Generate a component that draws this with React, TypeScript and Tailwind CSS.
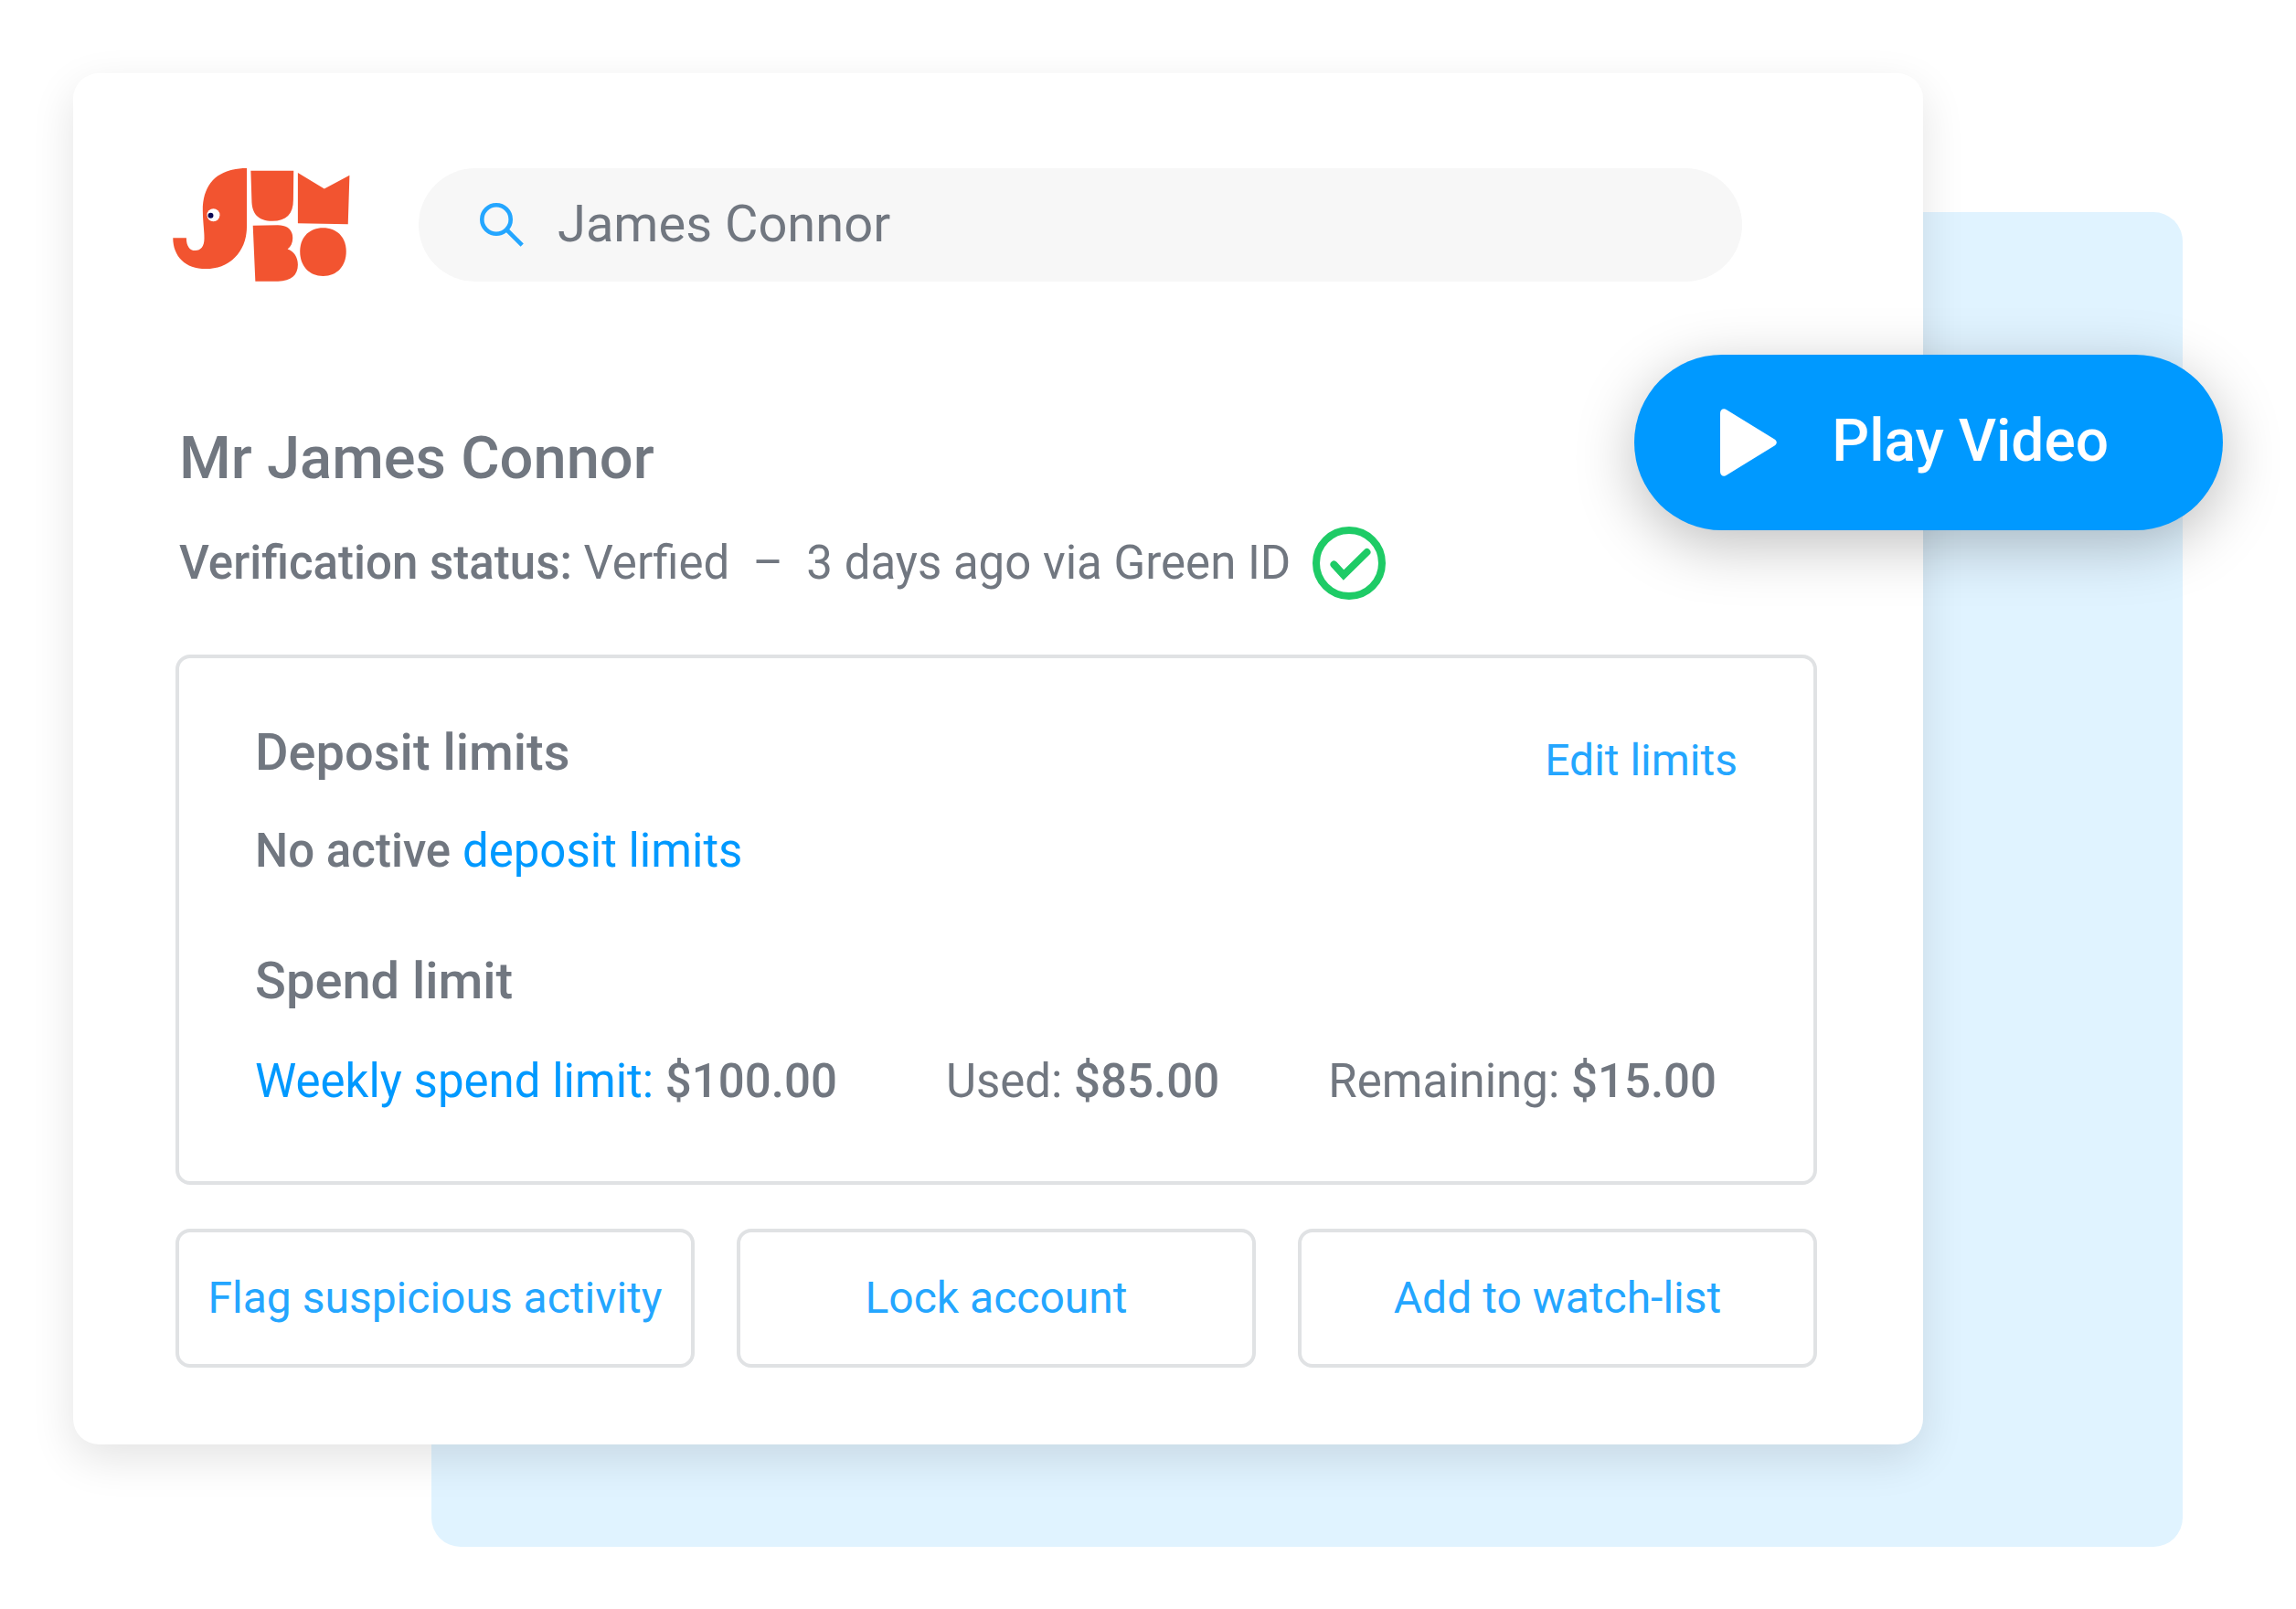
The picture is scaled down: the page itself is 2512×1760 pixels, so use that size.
import { useState } from "react";

// ---------- Data ----------
const ACTIONS = ["Flag suspicious activity", "Lock account", "Add to watch-list"];

// ---------- UI ----------
export default function App() {
    const [query, setQuery] = useState("James Connor");

    return (
        <div className="relative isolate min-h-screen w-full bg-white px-20 pt-20 pb-[180px] font-['Roboto',sans-serif] text-[51px] leading-[60px] text-[#717780] antialiased">
            {/* tinted panel behind the card */}
            <div className="absolute top-[232px] right-[124px] bottom-[68px] left-[472px] -z-10 rounded-[32px] bg-[#e0f3ff]" />

            <main className="mr-[328px] rounded-[28px] bg-white pt-[104px] pb-[84px] shadow-[0_16px_48px_rgba(0,0,0,0.11)]">
                <header className="flex items-center gap-[75px] pr-[198px] pl-[109px]">
                    <JumboLogo />
                    <div className="flex h-[124px] flex-1 items-center gap-[37px] rounded-full bg-[#f7f7f7] px-[67px]">
                        <label htmlFor="search">
                            <SearchIcon />
                        </label>
                        <input
                            id="search"
                            type="text"
                            value={query}
                            onChange={(e) => setQuery(e.target.value)}
                            className="min-w-0 flex-1 bg-transparent pb-0.5 text-[56px] leading-[80px] outline-none"
                        />
                    </div>
                </header>

                <div className="mt-[153px] pr-[116px] pl-28">
                    <h1 className="pl-1 text-[65px] leading-[80px] font-medium">Mr James Connor</h1>
                    <div className="mt-[35px] flex items-center gap-6 pl-1">
                        <p>
                            <span className="font-medium">Verification status:</span> Verfied&nbsp; –&nbsp; 3 days ago via Green ID
                        </p>
                        <CheckIcon />
                    </div>

                    <section className="mt-[60px] rounded-2xl border-4 border-[#e0e2e4] px-[83px] pt-[71px] pb-[79px]">
                        <div className="flex items-start justify-between">
                            <h2 className="text-[56px] leading-[64px] font-medium">Deposit limits</h2>
                            <a href="#edit" className="pt-[9px] text-[48px] leading-[64px] text-[#24a6ff]">
                                Edit limits
                            </a>
                        </div>
                        <p className="mt-[37px] font-medium">
                            No active{" "}
                            <a href="#deposit" className="font-normal text-[#0099ff]">
                                deposit limits
                            </a>
                        </p>

                        <h2 className="mt-20 text-[56px] leading-[64px] font-medium">Spend limit</h2>
                        <div className="mt-12 flex gap-[119px] whitespace-nowrap">
                            <p>
                                <a href="#weekly" className="text-[#0099ff]">
                                    Weekly spend limit:
                                </a>{" "}
                                <span className="font-medium">$100.00</span>
                            </p>
                            <p>
                                Used: <span className="font-medium">$85.00</span>
                            </p>
                            <p>
                                Remaining: <span className="font-medium">$15.00</span>
                            </p>
                        </div>
                    </section>

                    <div className="mt-12 grid grid-cols-3 gap-[46px]">
                        {ACTIONS.map((label) => (
                            <button
                                key={label}
                                type="button"
                                className="h-[152px] rounded-2xl border-4 border-[#e0e2e4] text-[48px] leading-[64px] whitespace-nowrap text-[#24a6ff]"
                            >
                                {label}
                            </button>
                        ))}
                    </div>
                </div>
            </main>

            <button
                type="button"
                className="absolute top-[388px] right-20 flex h-48 items-center gap-[60px] rounded-full bg-[#0099ff] pr-[125px] pl-[94px] text-[64px] leading-[80px] font-medium text-white shadow-[0_16px_64px_rgba(0,0,0,0.25)]"
            >
                <PlayIcon />
                <span className="pb-0.5">Play Video</span>
            </button>
        </div>
    );
}

// ---------- Icons ----------
function JumboLogo() {
    return (
        <svg viewBox="57 71 582 373" className="h-[124px] w-[194px] shrink-0" role="img" aria-label="Jumbo">
            <g fill="#f25430">
                <path d="M300 71V262C300 345 245 402 165 402C98 402 57 361 57 300H101C101 327 112 342 130 342C149 342 160 328 160 302C160 272 155 245 155 210C155 121 205 71 300 71Z" />
                <path d="M313 79H454L453 175C453 222 430 245 384 245C338 245 316 222 316 175Z" />
                <path d="M468 86L555 139L638 94L633 255L468 252Z" />
                <path d="M320 260L402 258C434 258 451 274 451 300C451 316 445 329 434 337C455 344 468 364 468 388C468 422 446 442 403 443H328Z" />
                <path d="M551 267C597 267 627 299 627 345C627 393 597 426 551 426C505 426 475 393 475 345C475 299 505 267 551 267Z" />
            </g>
            <circle cx="190" cy="225" r="21" fill="#fff" />
            <circle cx="181" cy="227" r="9" fill="#0a0a55" />
        </svg>
    );
}

function SearchIcon() {
    return (
        <svg
            viewBox="0 0 48 48"
            className="size-12 shrink-0"
            fill="none"
            stroke="#24a6ff"
            strokeWidth="4.6"
            role="img"
            aria-label="Search customers"
        >
            <circle cx="18" cy="18" r="15.7" />
            <path d="M29.5 29.5L46.2 46.2" />
        </svg>
    );
}

function CheckIcon() {
    return (
        <svg viewBox="0 0 80 80" className="size-20 shrink-0" fill="none" stroke="#1ecb66" strokeWidth="8">
            <circle cx="40" cy="40" r="36" />
            <path d="M23.5 41.5L34 53L59.5 28" strokeLinecap="round" />
        </svg>
    );
}

function PlayIcon() {
    return (
        <svg viewBox="0 0 62 74" className="h-[74px] w-[62px] shrink-0" fill="#fff">
            <path d="M0 5C0 .8 4 -1 7 1.3L59.5 33.5C62.5 35.5 62.5 38.5 59.5 40.5L7 72.7C4 75 0 73.2 0 69Z" />
        </svg>
    );
}
